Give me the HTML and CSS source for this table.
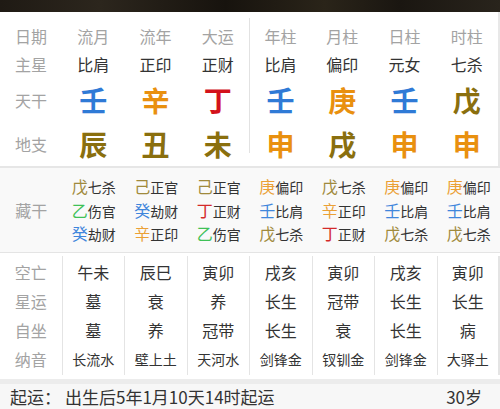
FILE: index.html
```html
<!DOCTYPE html>
<html lang="zh">
<head>
<meta charset="utf-8">
<link rel="stylesheet" href="styles.css">
</head>
<body>
<div class="topbar"></div>

<section class="pillars">
  <div class="col">
    <div class="c-h label">日期</div>
    <div class="c-z label">主星</div>
    <div class="c-g label small">天干</div>
    <div class="c-d label small">地支</div>
  </div>
  <div class="col">
    <div class="c-h head">流月</div>
    <div class="c-z">比肩</div>
    <div class="c-g big blue">壬</div>
    <div class="c-d big olive">辰</div>
  </div>
  <div class="col">
    <div class="c-h head">流年</div>
    <div class="c-z">正印</div>
    <div class="c-g big orange">辛</div>
    <div class="c-d big olive">丑</div>
  </div>
  <div class="col">
    <div class="c-h head">大运</div>
    <div class="c-z">正财</div>
    <div class="c-g big red">丁</div>
    <div class="c-d big olive">未</div>
  </div>
  <div class="col split">
    <div class="c-h head">年柱</div>
    <div class="c-z">比肩</div>
    <div class="c-g big blue">壬</div>
    <div class="c-d big orange">申</div>
  </div>
  <div class="col">
    <div class="c-h head">月柱</div>
    <div class="c-z">偏印</div>
    <div class="c-g big orange">庚</div>
    <div class="c-d big olive">戌</div>
  </div>
  <div class="col">
    <div class="c-h head">日柱</div>
    <div class="c-z">元女</div>
    <div class="c-g big blue">壬</div>
    <div class="c-d big orange">申</div>
  </div>
  <div class="col">
    <div class="c-h head">时柱</div>
    <div class="c-z">七杀</div>
    <div class="c-g big olive">戊</div>
    <div class="c-d big orange">申</div>
  </div>
</section>

<section class="canggan">
  <div class="cg-col label-col"><span class="label">藏干</span></div>
  <div class="cg-col">
    <div class="cg"><span class="gan olive">戊</span><span class="shen">七杀</span></div>
    <div class="cg"><span class="gan green">乙</span><span class="shen">伤官</span></div>
    <div class="cg"><span class="gan blue">癸</span><span class="shen">劫财</span></div>
  </div>
  <div class="cg-col">
    <div class="cg"><span class="gan olive">己</span><span class="shen">正官</span></div>
    <div class="cg"><span class="gan blue">癸</span><span class="shen">劫财</span></div>
    <div class="cg"><span class="gan orange">辛</span><span class="shen">正印</span></div>
  </div>
  <div class="cg-col">
    <div class="cg"><span class="gan olive">己</span><span class="shen">正官</span></div>
    <div class="cg"><span class="gan red">丁</span><span class="shen">正财</span></div>
    <div class="cg"><span class="gan green">乙</span><span class="shen">伤官</span></div>
  </div>
  <div class="cg-col">
    <div class="cg"><span class="gan orange">庚</span><span class="shen">偏印</span></div>
    <div class="cg"><span class="gan blue">壬</span><span class="shen">比肩</span></div>
    <div class="cg"><span class="gan olive">戊</span><span class="shen">七杀</span></div>
  </div>
  <div class="cg-col">
    <div class="cg"><span class="gan olive">戊</span><span class="shen">七杀</span></div>
    <div class="cg"><span class="gan orange">辛</span><span class="shen">正印</span></div>
    <div class="cg"><span class="gan red">丁</span><span class="shen">正财</span></div>
  </div>
  <div class="cg-col">
    <div class="cg"><span class="gan orange">庚</span><span class="shen">偏印</span></div>
    <div class="cg"><span class="gan blue">壬</span><span class="shen">比肩</span></div>
    <div class="cg"><span class="gan olive">戊</span><span class="shen">七杀</span></div>
  </div>
  <div class="cg-col">
    <div class="cg"><span class="gan orange">庚</span><span class="shen">偏印</span></div>
    <div class="cg"><span class="gan blue">壬</span><span class="shen">比肩</span></div>
    <div class="cg"><span class="gan olive">戊</span><span class="shen">七杀</span></div>
  </div>
</section>

<section class="misc">
  <div class="m-col first">
    <div class="m label">空亡</div>
    <div class="m label">星运</div>
    <div class="m label">自坐</div>
    <div class="m label">纳音</div>
  </div>
  <div class="m-col">
    <div class="m">午未</div><div class="m">墓</div><div class="m">墓</div><div class="m ny">长流水</div>
  </div>
  <div class="m-col">
    <div class="m">辰巳</div><div class="m">衰</div><div class="m">养</div><div class="m ny">壁上土</div>
  </div>
  <div class="m-col">
    <div class="m">寅卯</div><div class="m">养</div><div class="m">冠带</div><div class="m ny">天河水</div>
  </div>
  <div class="m-col">
    <div class="m">戌亥</div><div class="m">长生</div><div class="m">长生</div><div class="m ny">剑锋金</div>
  </div>
  <div class="m-col">
    <div class="m">寅卯</div><div class="m">冠带</div><div class="m">衰</div><div class="m ny">钗钏金</div>
  </div>
  <div class="m-col">
    <div class="m">戌亥</div><div class="m">长生</div><div class="m">长生</div><div class="m ny">剑锋金</div>
  </div>
  <div class="m-col">
    <div class="m">寅卯</div><div class="m">长生</div><div class="m">病</div><div class="m ny">大驿土</div>
  </div>
</section>

<footer class="qiyun">
  <span class="qy-label">起运：</span>
  <span class="qy-text">出生后5年1月10天14时起运</span>
  <span class="qy-age">30岁</span>
</footer>
</body>
</html>
```

FILE: styles.css
```css
* { box-sizing: border-box; margin: 0; padding: 0; }
html, body { width: 500px; height: 409px; overflow: hidden; }
body {
  font-family: "Noto Sans CJK SC", "Noto Sans", sans-serif;
  color: #333;
  background: #f4f4f4;
}

.topbar {
  height: 12px;
  background: linear-gradient(90deg, #1f1a14 0%, #2c261d 20%, #17130e 45%, #2a2419 65%, #1a1611 80%, #29241c 100%);
}

/* Pillars */
.pillars {
  display: flex;
  background: #fff;
  padding: 6px 0 13px;
  border-right: 2px solid #e8e8e8;
}
.col {
  width: 62.5px;
  height: 135px;
  display: flex;
  flex-direction: column;
  align-items: center;
  padding-top: 4px;
}
.col.split { border-left: 1px solid #e2e2e2; }
.col > div { flex-shrink: 0; text-align: center; }
.c-h, .c-z { height: 28px; line-height: 28px; font-size: 16px; }
.c-g, .c-d { height: 44px; line-height: 44px; }
.label { color: #a3a3a3; }
.head { color: #a3a3a3; }
.big { font-size: 28px; font-weight: 700; }

.blue { color: #2f7ad6; }
.orange { color: #e9900f; }
.red { color: #d3121b; }
.olive { color: #8a6f0e; }
.green { color: #33b84a; }

/* Canggan */
.canggan {
  display: flex;
  background: #f9f9f9;
  border-top: 2px solid #e6e6e6;
  border-bottom: 1px solid #e4e4e4;
  padding: 7px 0 6px;
}
.cg-col {
  width: 62.5px;
  display: flex;
  flex-direction: column;
  align-items: center;
}
.cg-col.label-col { justify-content: center; font-size: 16px; }
.cg {
  height: 23.5px;
  line-height: 23.5px;
  white-space: nowrap;
}
.gan { font-size: 16px; }
.gan.olive { color: #a08a3c; }
.gan.blue { color: #3f86dc; }
.gan.orange { color: #eba035; }
.gan.red { color: #d42a2a; }
.gan.green { color: #3fc157; }
.shen { font-size: 14px; color: #333; }

/* Misc */
.misc {
  display: flex;
  background: #fff;
  padding: 3px 0 4px;
}
.m-col {
  width: 62.5px;
  padding-top: 2px;
  border-right: 1px solid #e4e4e4;
}
.m-col:last-child { border-right: 2px solid #e4e4e4; }
.m {
  height: 29.3px;
  line-height: 29.3px;
  text-align: center;
  font-size: 16px;
}
.m.ny { font-size: 14px; }

/* Footer */
.qiyun {
  display: flex;
  align-items: center;
  height: 31px;
  margin-top: 0;
  border-top: 5px solid #ececec;
  background: #f7f7f7;
  padding: 0 18px 0 10px;
  font-size: 17px;
  color: #333;
}
.qy-label { width: 55px; }
.qy-text { flex: 1; }
.qy-age { }
```
